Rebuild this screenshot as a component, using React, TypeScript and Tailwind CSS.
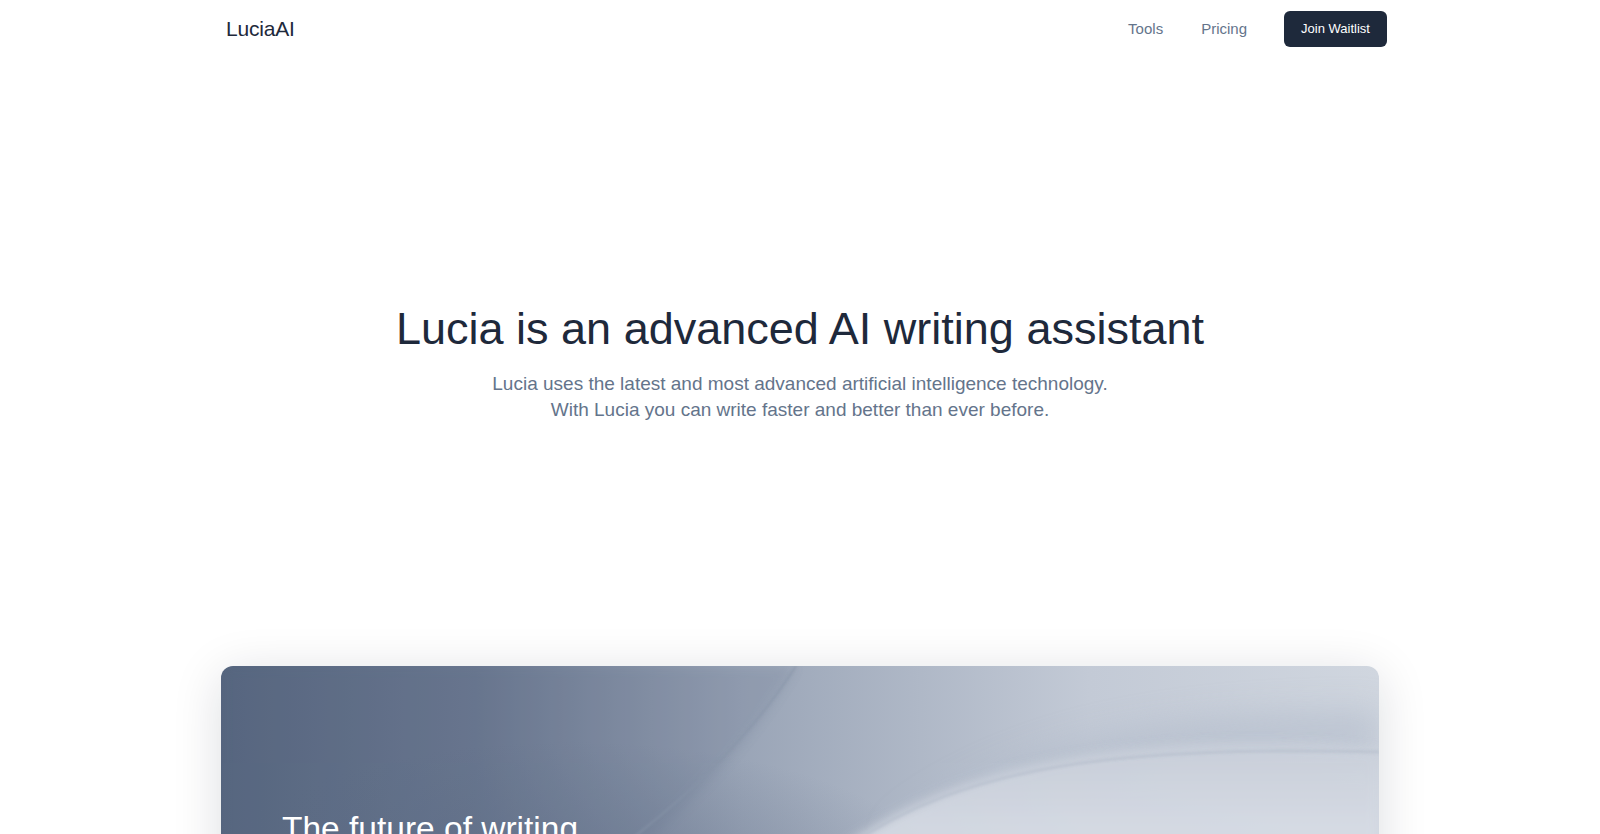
import React from "react";

const sans = "font-['Liberation_Sans',Arial,sans-serif]";

function Header() {
  return (
    <header className="h-[58px] pl-[226px] pr-[213px] flex items-center justify-between">
      <a href="#" className={`${sans} text-[21px] text-[#1e293b] tracking-[-0.2px]`}>
        LuciaAI
      </a>
      <nav className={`${sans} flex items-center text-[15px] text-[#64748b]`}>
        <a href="#" className="mr-[38px]">Tools</a>
        <a href="#" className="mr-[37px]">Pricing</a>
        <button
          type="button"
          className="h-[36px] w-[103px] rounded-md bg-[#1e293b] text-white text-[13px]"
        >
          Join Waitlist
        </button>
      </nav>
    </header>
  );
}

function Hero() {
  return (
    <section className="h-[608px] pt-[4px] flex flex-col items-center justify-center text-center">
      <h1 className={`${sans} text-[45px] leading-none text-[#1e293b]`}>
        Lucia is an advanced AI writing assistant
      </h1>
      <p className={`${sans} mt-[20px] text-[19px] leading-[26px] text-[#64748b]`}>
        Lucia uses the latest and most advanced artificial intelligence technology.
        <br />
        With Lucia you can write faster and better than ever before.
      </p>
    </section>
  );
}

// fondo con ondas de la tarjeta
function CardBackground() {
  return (
    <svg className="absolute inset-0 w-full h-full" viewBox="0 0 1158 500" preserveAspectRatio="none">
      <defs>
        <linearGradient id="base" x1="0" y1="0" x2="1" y2="0">
          <stop offset="0" stopColor="#55657e" />
          <stop offset="0.22" stopColor="#6a7890" />
          <stop offset="0.45" stopColor="#9aa5b7" />
          <stop offset="0.75" stopColor="#c3cad6" />
          <stop offset="1" stopColor="#d0d6df" />
        </linearGradient>
        <radialGradient id="shade" cx="0.3" cy="0.5" r="0.35">
          <stop offset="0" stopColor="#5a6882" stopOpacity="0.55" />
          <stop offset="1" stopColor="#5a6882" stopOpacity="0" />
        </radialGradient>
        <linearGradient id="glow" x1="0" y1="0" x2="0" y2="1">
          <stop offset="0" stopColor="#c9cfda" />
          <stop offset="0.2" stopColor="#d6dbe4" />
          <stop offset="1" stopColor="#eceff4" />
        </linearGradient>
        <filter id="soft" x="-0.2" y="-0.2" width="1.4" height="1.4">
          <feGaussianBlur stdDeviation="6" />
        </filter>
        <filter id="wide" x="-0.2" y="-0.5" width="1.4" height="2">
          <feGaussianBlur stdDeviation="16" />
        </filter>
        <filter id="blur2">
          <feGaussianBlur stdDeviation="1.2" />
        </filter>
      </defs>
      <rect width="1158" height="500" fill="url(#base)" />
      <rect width="1158" height="500" fill="url(#shade)" />
      <path
        d="M575 0 C520 90 450 160 350 240 L0 240 L0 0 Z"
        fill="#5d6c86"
        opacity="0.18"
        filter="url(#soft)"
      />
      <path
        d="M575 0 C530 70 470 130 375 200"
        stroke="#8794a8"
        strokeWidth="2"
        fill="none"
        opacity="0.6"
        filter="url(#blur2)"
      />
      <path
        d="M660 175 C780 80 920 45 1158 45 L1158 90 C960 80 800 100 660 175 Z"
        fill="#aeb8c8"
        opacity="0.55"
        filter="url(#wide)"
      />
      <path
        d="M610 190 C730 100 880 78 1040 78 C1100 78 1140 82 1158 86 L1158 500 L520 500 C540 360 560 240 610 190 Z"
        fill="url(#glow)"
        opacity="0.9"
        filter="url(#soft)"
      />
      <path
        d="M625 182 C745 98 900 80 1158 86"
        stroke="#b0b9c8"
        strokeWidth="3"
        fill="none"
        opacity="0.45"
        filter="url(#blur2)"
      />
    </svg>
  );
}

function Showcase() {
  return (
    <section className="px-[221px] pb-16">
      <div className="relative h-[500px] rounded-xl overflow-hidden shadow-[0_8px_50px_rgba(15,23,42,0.14)]">
        <CardBackground />
        <div className="relative pt-[142px] pl-[61px]">
          <h2 className={`${sans} text-[33.5px] font-light text-white leading-[42px]`}>
            The future of writing
          </h2>
        </div>
      </div>
    </section>
  );
}

export default function App() {
  return (
    <div className="min-h-screen bg-white">
      <Header />
      <Hero />
      <Showcase />
    </div>
  );
}
